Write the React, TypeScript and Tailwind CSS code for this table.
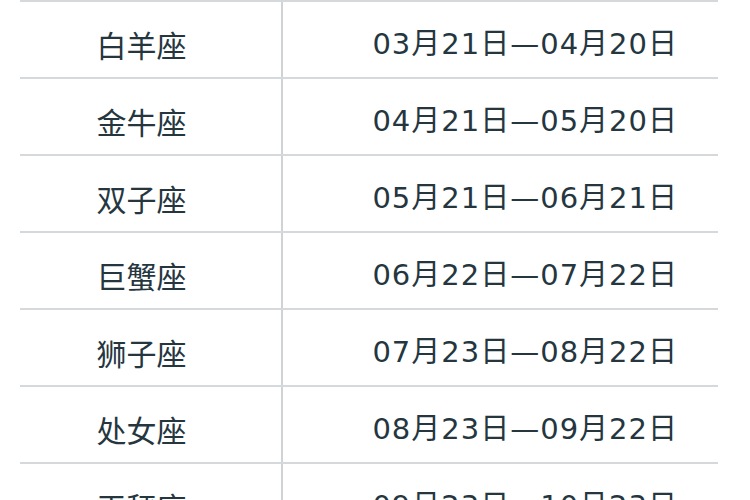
const rows: [string, string][] = [
  ["白羊座", "03月21日—04月20日"],
  ["金牛座", "04月21日—05月20日"],
  ["双子座", "05月21日—06月21日"],
  ["巨蟹座", "06月22日—07月22日"],
  ["狮子座", "07月23日—08月22日"],
  ["处女座", "08月23日—09月22日"],
  ["天秤座", "09月23日—10月23日"],
];

export default function App() {
  return (
    <div
      className="h-[500px] w-[750px] overflow-hidden bg-white pl-[20px] text-[#25363f]"
      style={{ fontFamily: '"Noto Sans CJK SC", "Noto Sans", sans-serif' }}
    >
      <div className="w-[698px] border-t-2 border-[#d6d9dc]">
        {rows.map(([name, date]) => (
          <div key={name} className="flex h-[77px] border-b-2 border-[#d6d9dc]">
            <div className="flex w-[263px] items-center justify-center border-r-2 border-[#cfd3d6] pr-[18px] pt-[10px] text-[30px]">
              {name}
            </div>
            <div className="flex flex-1 items-center justify-end pr-[40px] pt-[10px] font-['DejaVu_Sans','Noto_Sans_CJK_SC',sans-serif] text-[29px] tracking-[1px]">
              {date}
            </div>
          </div>
        ))}
      </div>
    </div>
  );
}
